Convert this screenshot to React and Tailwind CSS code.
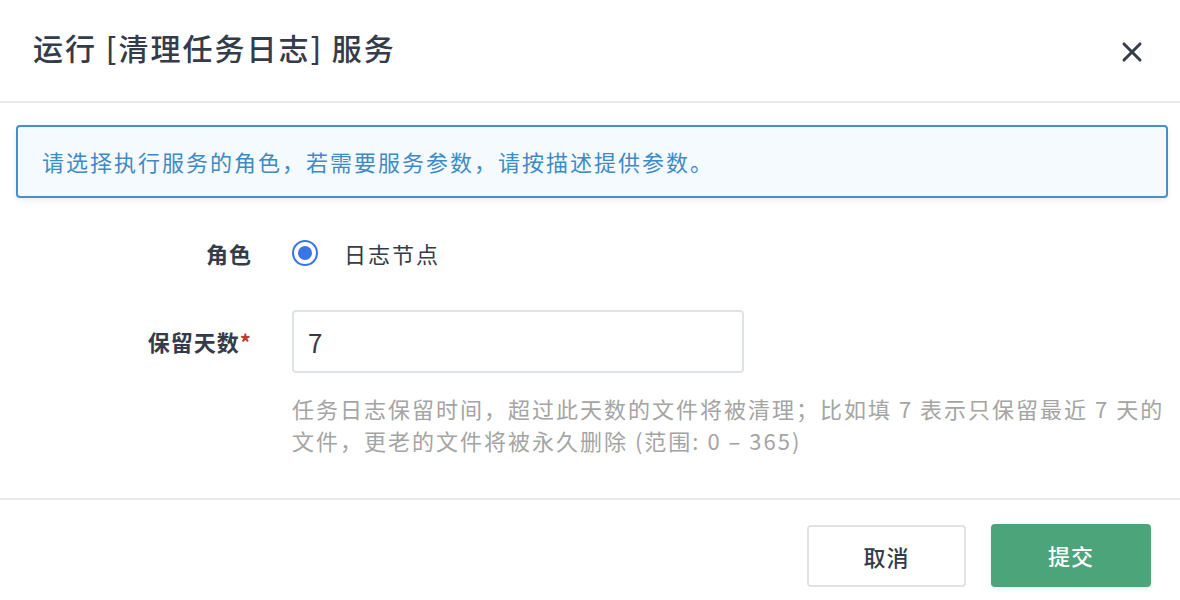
import { X } from 'lucide-react';

const RunServiceDialog = () => {
    return (
        <div className="w-[1180px] h-[600px] bg-white overflow-hidden text-[#333] font-['Noto_Sans_CJK_SC','Noto_Sans',sans-serif]">
            {/* Header */}
            <div className="h-[103px] flex items-center justify-between pl-[33px] pr-[32px] border-b-2 border-[#e9e9e9]">
                <h2 className="text-[30px] tracking-[2px] font-medium text-[#343b49] -mt-[6px]">运行 [清理任务日志] 服务</h2>
                <button className="text-[#353d4b] mt-[2px]">
                    <X className="w-[32px] h-[32px]" strokeWidth={2.3} />
                </button>
            </div>

            {/* Body */}
            <div className="pt-[22px] pb-[42px]">
                <div className="ml-4 mr-3 h-[73px] flex items-center pl-[24px] border-2 border-[#4a8ec8] rounded-[4px] bg-[#f5faff] shadow-[0_2px_6px_rgba(0,0,0,0.08)]">
                    <p className="text-[22px] tracking-[2px] text-[#3e8ac5]">请选择执行服务的角色，若需要服务参数，请按描述提供参数。</p>
                </div>

                <div className="mt-[35px] flex items-center h-[40px]">
                    <div className="w-[252px] text-right text-[22px] tracking-[1px] font-bold text-[#343b49]">角色</div>
                    <div className="ml-[40px] flex items-center gap-[26px]">
                        <span className="w-[26px] h-[26px] rounded-full border-[2.5px] border-[#3a75e6] flex items-center justify-center">
                            <span className="w-[14px] h-[14px] rounded-full bg-[#3a75e6]" />
                        </span>
                        <span className="text-[22px] tracking-[2px] text-[#343b49]">日志节点</span>
                    </div>
                </div>

                <div className="mt-[37px] flex items-center">
                    <div className="w-[252px] text-right text-[22px] tracking-[1px] font-bold text-[#343b49]">
                        保留天数<span className="text-[#c0392b]">*</span>
                    </div>
                    <div className="ml-[40px] w-[452px] h-[63px] border-2 border-[#dfe3e8] rounded-[4px] flex items-center pl-[14px] text-[26px] text-[#343b49]">
                        7
                    </div>
                </div>

                <p className="ml-[292px] mt-[19px] text-[22px] leading-[32px] tracking-[2px] text-[#a4a4a4]">
                    任务日志保留时间，超过此天数的文件将被清理；比如填 7 表示只保留最近 7 天的<br />
                    文件，更老的文件将被永久删除 (范围: 0 – 365)
                </p>
            </div>

            {/* Footer */}
            <div className="border-t-2 border-[#e9e9e9] flex justify-end gap-[25px] pr-[29px] pt-[25px]">
                <button className="w-[159px] h-[62px] rounded-[4px] border-2 border-[#e2e2e2] bg-white text-[22px] tracking-[1px] font-medium text-[#343b49]">取消</button>
                <button className="w-[160px] h-[63px] -mt-px rounded-[4px] bg-[#4ca47a] text-[22px] tracking-[1px] font-medium text-white shadow-[0_2px_4px_rgba(0,0,0,0.08)]">提交</button>
            </div>
        </div>
    );
};

export default function App() {
    return <RunServiceDialog />;
}
